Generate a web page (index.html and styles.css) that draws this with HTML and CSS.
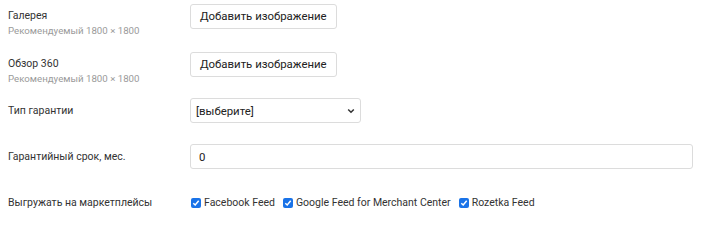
FILE: index.html
```html
<!DOCTYPE html>
<html lang="ru">
<head>
<meta charset="utf-8">
<link rel="stylesheet" href="styles.css">
</head>
<body>
<div class="form">
  <div class="row row-top">
    <div class="label">
      <div class="title">Галерея</div>
      <div class="hint">Рекомендуемый 1800 × 1800</div>
    </div>
    <div class="control"><button class="btn" type="button">Добавить изображение</button></div>
  </div>
  <div class="row row-top">
    <div class="label">
      <div class="title">Обзор 360</div>
      <div class="hint">Рекомендуемый 1800 × 1800</div>
    </div>
    <div class="control"><button class="btn" type="button">Добавить изображение</button></div>
  </div>
  <div class="row">
    <div class="label"><div class="title">Тип гарантии</div></div>
    <div class="control">
      <div class="select">
        <span>[выберите]</span>
        <svg class="chev" width="8" height="6" viewBox="0 0 8 6"><path d="M1.2 1.5 L4 4.3 L6.8 1.5" fill="none" stroke="#333" stroke-width="1.5"/></svg>
      </div>
    </div>
  </div>
  <div class="row">
    <div class="label"><div class="title">Гарантийный срок, мес.</div></div>
    <div class="control"><div class="input">0</div></div>
  </div>
  <div class="row">
    <div class="label"><div class="title">Выгружать на маркетплейсы</div></div>
    <div class="control checks">
      <label class="check"><span class="box"><svg width="8" height="8" viewBox="0 0 8 8"><path d="M1.3 4.2 L3.2 6 L6.7 1.8" fill="none" stroke="#fff" stroke-width="1.5"/></svg></span>Facebook Feed</label>
      <label class="check"><span class="box"><svg width="8" height="8" viewBox="0 0 8 8"><path d="M1.3 4.2 L3.2 6 L6.7 1.8" fill="none" stroke="#fff" stroke-width="1.5"/></svg></span>Google Feed for Merchant Center</label>
      <label class="check"><span class="box"><svg width="8" height="8" viewBox="0 0 8 8"><path d="M1.3 4.2 L3.2 6 L6.7 1.8" fill="none" stroke="#fff" stroke-width="1.5"/></svg></span>Rozetka Feed</label>
    </div>
  </div>
</div>
</body>
</html>
```

FILE: styles.css
```css
html, body {
  margin: 0;
  padding: 0;
  background: #fff;
}
body {
  font-family: Roboto, "Noto Sans", Arial, sans-serif;
  color: #333;
}
.form {
  padding: 4px 0 0 8px;
  display: flex;
  flex-direction: column;
  gap: 21px;
}
.row {
  display: flex;
  align-items: center;
  height: 25px;
}
.row-top {
  align-items: flex-start;
}
.row-top:first-child {
  margin-bottom: 2px;
}
.label {
  width: 182px;
  flex: none;
}
.row-top .label { padding-top: 4px; }
.title {
  font-size: 10.5px;
  line-height: 16px;
  color: #333;
}
.hint {
  font-size: 9.7px;
  line-height: 14px;
  color: #9a9a9a;
}
.control {
  flex: 1;
  display: flex;
  align-items: center;
}
.btn {
  font-family: inherit;
  font-size: 11.4px;
  color: #222;
  background: #fff;
  border: 1px solid #dcdcdc;
  border-radius: 3px;
  height: 25px;
  padding: 0 9px;
  box-sizing: border-box;
  line-height: 23px;
}
.select {
  width: 171px;
  height: 25px;
  box-sizing: border-box;
  border: 1px solid #dcdcdc;
  border-radius: 3px;
  display: flex;
  align-items: center;
  justify-content: space-between;
  padding: 0 5px 0 5px;
  font-size: 11.4px;
  color: #222;
}
.input {
  width: 503px;
  height: 25px;
  box-sizing: border-box;
  border: 1px solid #dcdcdc;
  border-radius: 3px;
  display: flex;
  align-items: center;
  padding: 0 8px;
  font-size: 11.4px;
  color: #222;
}
.checks {
  gap: 8px;
  padding-left: 1px;
}
.check {
  display: flex;
  align-items: center;
  font-size: 10.5px;
  color: #333;
}
.box {
  width: 10px;
  height: 10px;
  border-radius: 2px;
  background: #1a73e8;
  display: inline-flex;
  align-items: center;
  justify-content: center;
  margin-right: 3px;
}
.box svg { display: block; }
```
